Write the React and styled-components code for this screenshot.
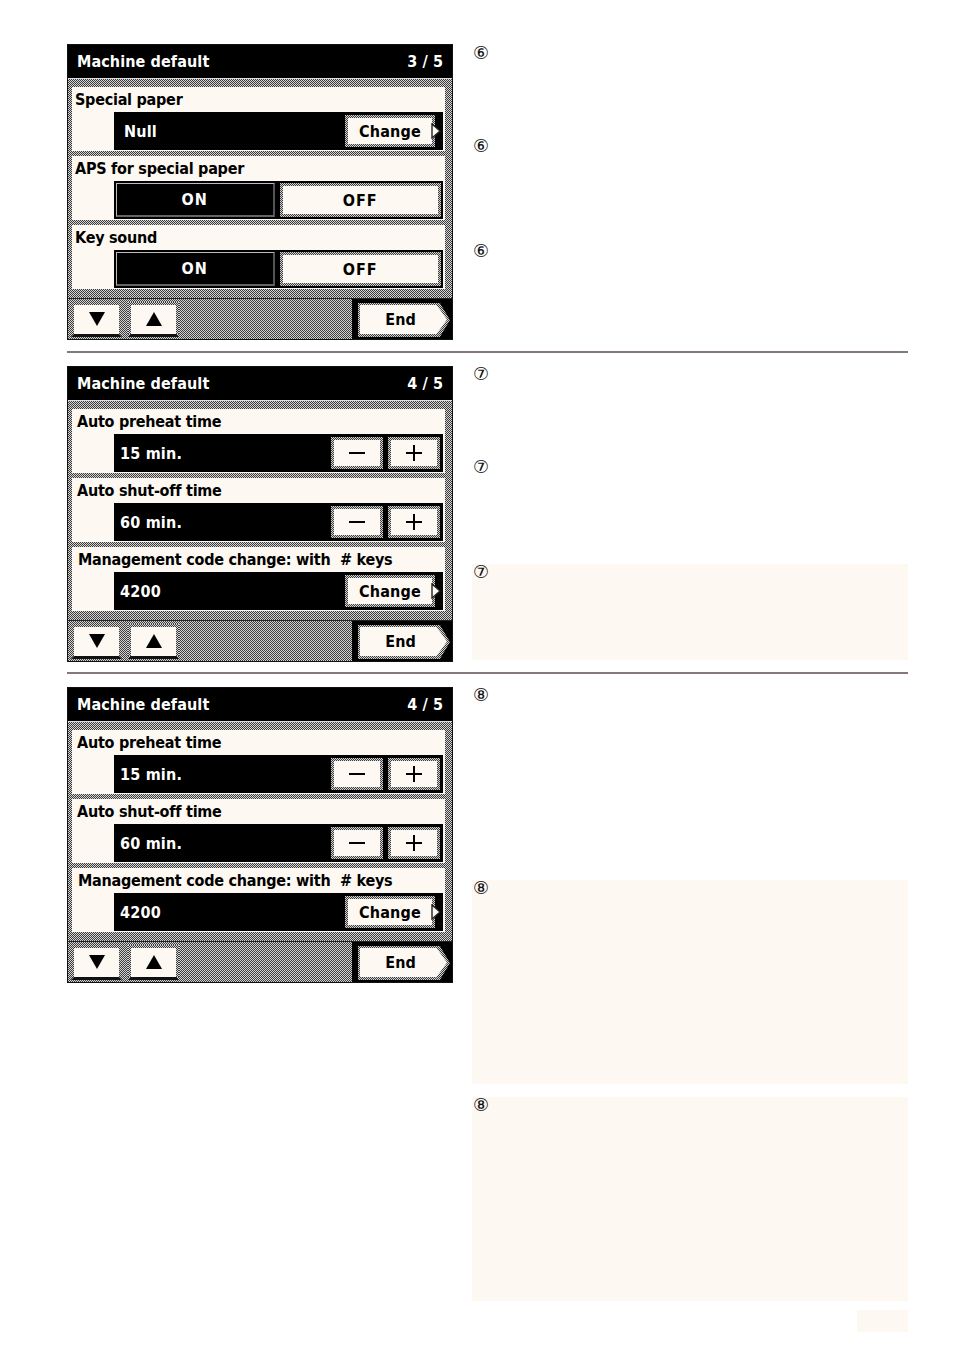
import React from "react";
import styled, { createGlobalStyle } from "styled-components";

const cream = "#fdf8f1";
const hatch = "repeating-conic-gradient(#3c3c3c 0 25%, #d4d4d4 0 50%) 0 0 / 2px 2px";
const lcd = `"DejaVu Sans Condensed", "Liberation Sans Narrow", "DejaVu Sans", sans-serif`;

const GlobalStyle = createGlobalStyle`
  html, body { margin: 0; padding: 0; background: #fff; }
  body { font-family: "DejaVu Sans", sans-serif; }
`;

const Page = styled.div`
  width: 954px;
  box-sizing: border-box;
  padding: 44px 0 10px 67px;
`;

const Row = styled.div`
  display: flex;
  gap: 19px;
  align-items: flex-start;
`;

const Divider = styled.div`
  width: 841px;
  height: 2px;
  background: #847878;
  margin: ${(p) => p.$mt}px 0 ${(p) => p.$mb}px;
`;

const Notes = styled.div`
  width: 436px;
  display: flex;
  flex-direction: column;
  margin-top: ${(p) => p.$mt || 0}px;
`;

const Note = styled.div`
  height: ${(p) => p.$h}px;
  margin-bottom: ${(p) => p.$mb || 0}px;
  padding: 0 0 0 1px;
  box-sizing: border-box;
  background: ${(p) => (p.$shade ? cream : "transparent")};
`;

const Marker = styled.span`
  display: block;
  font-size: 18px;
  line-height: 16px;
  color: #111;
`;

const PageNo = styled.div`
  align-self: flex-end;
  width: 51px;
  height: 22px;
  margin-top: 9px;
  background: ${cream};
`;

/* ---- operation panel ---- */

const Panel = styled.div`
  width: 386px;
  height: ${(p) => p.$h}px;
  box-sizing: border-box;
  border: 1px solid #111;
  background: ${hatch};
  display: flex;
  flex-direction: column;
  font-family: ${lcd};
  font-weight: bold;
`;

const Header = styled.div`
  height: 33px;
  flex-shrink: 0;
  background: #000;
  color: #fff;
  display: flex;
  align-items: center;
  justify-content: space-between;
  padding: 0 9px;
  font-size: 16px;
  letter-spacing: 0.1px;
  border-bottom: 1px solid #ddd;
`;

const Body = styled.div`
  display: flex;
  flex-direction: column;
  gap: 5px;
  padding: 8px 7px 0 4px;
`;

const Section = styled.div`
  height: 64px;
  box-sizing: border-box;
  background: ${cream};
  display: flex;
  flex-direction: column;
  padding: 0 2px 1px 0;
`;

const Label = styled.div`
  height: 25px;
  line-height: 25px;
  padding-left: ${(p) => p.$indent}px;
  font-size: 16px;
  letter-spacing: -0.25px;
  color: #000;
  white-space: pre;
`;

const Field = styled.div`
  flex: 1;
  margin-left: 42px;
  background: #000;
  display: flex;
  align-items: center;
  gap: 5px;
  padding: ${(p) => (p.$toggle ? "2px 2px 2px 2px" : "0 3px 0 0")};
`;

const Value = styled.span`
  flex: 1;
  color: #fff;
  font-size: 16px;
  letter-spacing: 0.2px;
  padding-left: ${(p) => p.$indent}px;
`;

const bevel = `
  border: 3px solid transparent;
  background: linear-gradient(${cream}, ${cream}) padding-box, ${hatch} border-box;
  box-sizing: border-box;
`;

const ChangeWrap = styled.div`
  position: relative;
  width: 95px;
  height: 32px;
`;

const ChangeButton = styled.div`
  ${bevel}
  width: 90px;
  height: 32px;
  display: flex;
  align-items: center;
  justify-content: center;
  font-size: 16px;
  letter-spacing: 0.2px;
  color: #000;
`;

const Tab = styled.svg`
  position: absolute;
  right: -1px;
  top: 8px;
`;

const Toggle = styled.div`
  flex: 1;
  height: 100%;
  box-sizing: border-box;
  display: flex;
  align-items: center;
  justify-content: center;
  font-size: 16px;
  letter-spacing: 1px;
  ${(p) =>
    p.$on
      ? `
    background: #000;
    color: #fff;
    border-top: 1px solid #bbb;
    border-left: 1px solid #bbb;
    border-bottom: 2px solid #666;
    border-right: 2px solid #555;
  `
      : `
    ${bevel}
    color: #000;
  `}
`;

const StepButton = styled.div`
  ${bevel}
  width: 52px;
  height: 32px;
  display: flex;
  align-items: center;
  justify-content: center;
`;

const Bar = styled.div`
  flex: 1;
  margin-top: 9px;
  border-top: 1px solid #222;
  display: flex;
  align-items: center;
  gap: 6px;
  padding-left: 3px;
`;

const NavButton = styled.div`
  ${bevel}
  width: 51px;
  height: 35px;
  display: flex;
  align-items: center;
  justify-content: center;
  border-bottom-color: #111;
`;

const EndBlock = styled.div`
  margin-left: auto;
  width: 100px;
  align-self: stretch;
  background: #000;
  display: flex;
  align-items: center;
  padding: 4px 2px 2px 6px;
  box-sizing: border-box;
`;

const EndShape = styled.div`
  width: 92px;
  height: 34px;
  background: ${hatch};
  clip-path: polygon(0 0, 89% 0, 100% 50%, 89% 100%, 0 100%);
  display: flex;
  padding: 2px 3px 3px 2px;
  box-sizing: border-box;
`;

const EndFace = styled.div`
  flex: 1;
  background: ${cream};
  clip-path: polygon(0 0, 88% 0, 100% 50%, 88% 100%, 0 100%);
  display: flex;
  align-items: center;
  justify-content: center;
  padding-right: 6px;
  font-size: 16px;
  color: #000;
`;

const Triangle = ({ up }) => (
  <svg width="18" height="16" viewBox="0 0 18 16">
    <polygon points={up ? "9,1 17,15 1,15" : "1,1 17,1 9,15"} fill="#000" />
  </svg>
);

const Minus = () => (
  <svg width="18" height="18" viewBox="0 0 18 18">
    <rect x="1" y="8" width="16" height="2" fill="#000" />
  </svg>
);

const Plus = () => (
  <svg width="18" height="18" viewBox="0 0 18 18">
    <rect x="1" y="8" width="16" height="2" fill="#000" />
    <rect x="8" y="1" width="2" height="16" fill="#000" />
  </svg>
);

function Change() {
  return (
    <ChangeWrap>
      <ChangeButton>Change</ChangeButton>
      <Tab width="10" height="16" viewBox="0 0 10 16">
        <polygon points="1,1 9,8 1,15" fill={cream} stroke="#222" strokeWidth="1.4" />
      </Tab>
    </ChangeWrap>
  );
}

function BottomBar() {
  return (
    <Bar>
      <NavButton>
        <Triangle />
      </NavButton>
      <NavButton>
        <Triangle up />
      </NavButton>
      <EndBlock>
        <EndShape>
          <EndFace>End</EndFace>
        </EndShape>
      </EndBlock>
    </Bar>
  );
}

function PanelThree() {
  return (
    <Panel $h={296}>
      <Header>
        <span>Machine default</span>
        <span>3 / 5</span>
      </Header>
      <Body>
        <Section>
          <Label $indent={3}>Special paper</Label>
          <Field>
            <Value $indent={10}>Null</Value>
            <Change />
          </Field>
        </Section>
        <Section>
          <Label $indent={3}>APS for special paper</Label>
          <Field $toggle>
            <Toggle $on>ON</Toggle>
            <Toggle>OFF</Toggle>
          </Field>
        </Section>
        <Section>
          <Label $indent={3}>Key sound</Label>
          <Field $toggle>
            <Toggle $on>ON</Toggle>
            <Toggle>OFF</Toggle>
          </Field>
        </Section>
      </Body>
      <BottomBar />
    </Panel>
  );
}

function PanelFour() {
  return (
    <Panel $h={296}>
      <Header>
        <span>Machine default</span>
        <span>4 / 5</span>
      </Header>
      <Body>
        <Section>
          <Label $indent={5}>Auto preheat time</Label>
          <Field>
            <Value $indent={6}>15 min.</Value>
            <StepButton>
              <Minus />
            </StepButton>
            <StepButton>
              <Plus />
            </StepButton>
          </Field>
        </Section>
        <Section>
          <Label $indent={5}>Auto shut-off time</Label>
          <Field>
            <Value $indent={6}>60 min.</Value>
            <StepButton>
              <Minus />
            </StepButton>
            <StepButton>
              <Plus />
            </StepButton>
          </Field>
        </Section>
        <Section>
          <Label $indent={6}>{"Management code change: with  # keys"}</Label>
          <Field>
            <Value $indent={6}>4200</Value>
            <Change />
          </Field>
        </Section>
      </Body>
      <BottomBar />
    </Panel>
  );
}

export default function App() {
  return (
    <Page>
      <GlobalStyle />
      <Row>
        <PanelThree />
        <Notes $mt={1}>
          <Note $h={93}>
            <Marker>⑥</Marker>
          </Note>
          <Note $h={105}>
            <Marker>⑥</Marker>
          </Note>
          <Note $h={60}>
            <Marker>⑥</Marker>
          </Note>
        </Notes>
      </Row>
      <Divider $mt={11} $mb={13} />
      <Row>
        <PanelFour />
        <Notes>
          <Note $h={93}>
            <Marker>⑦</Marker>
          </Note>
          <Note $h={105}>
            <Marker>⑦</Marker>
          </Note>
          <Note $h={96} $shade>
            <Marker>⑦</Marker>
          </Note>
        </Notes>
      </Row>
      <Divider $mt={10} $mb={13} />
      <Row>
        <PanelFour />
        <Notes>
          <Note $h={193}>
            <Marker>⑧</Marker>
          </Note>
          <Note $h={204} $mb={13} $shade>
            <Marker>⑧</Marker>
          </Note>
          <Note $h={204} $shade>
            <Marker>⑧</Marker>
          </Note>
          <PageNo />
        </Notes>
      </Row>
    </Page>
  );
}
